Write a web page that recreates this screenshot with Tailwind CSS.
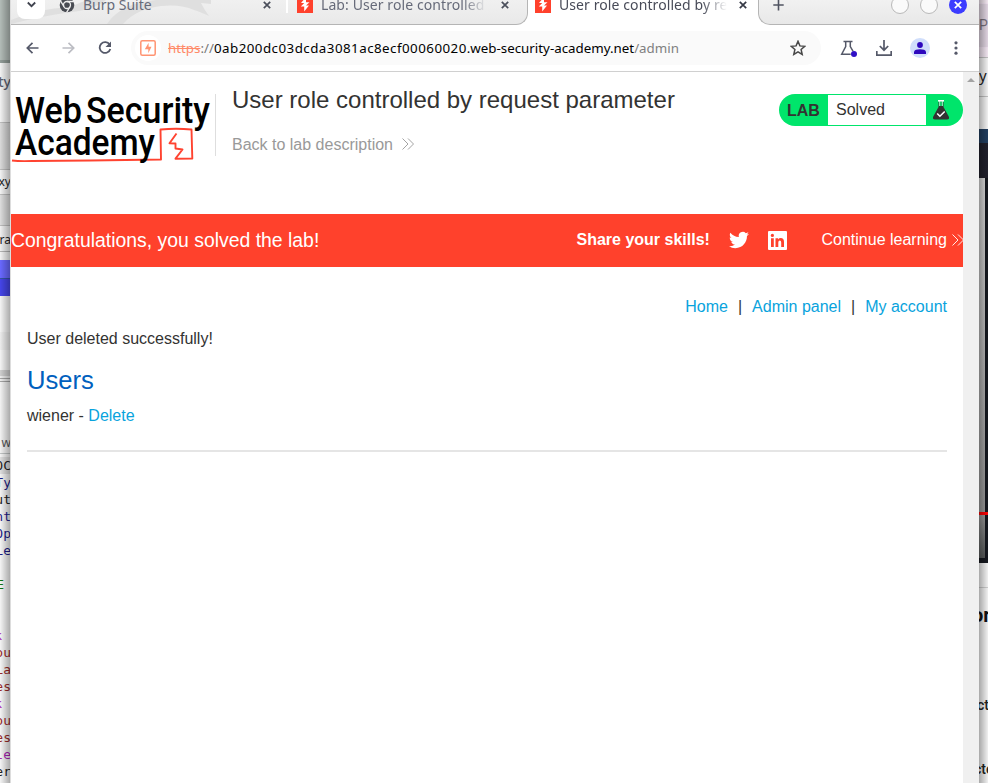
<!DOCTYPE html>
<html lang="en">
<head>
<meta charset="utf-8">
<title>User role controlled by request parameter</title>
<script src="https://cdn.jsdelivr.net/npm/@tailwindcss/browser@4"></script>
</head>
<body class="w-[988px] h-[783px] overflow-hidden flex bg-[#eeeeee] font-['Liberation_Sans',Arial,sans-serif] text-[16px] text-[#333332]">

<svg class="hidden">
  <symbol id="burp" viewBox="0 0 16 16"><rect width="16" height="16" fill="#ff412c"/><path d="M9 0v5.200h3.500L9 8.600h3L7.200 14.500v-5H3.800L7.200 6H4z" fill="#fff"/></symbol>
  <symbol id="close" viewBox="0 0 8 8"><path d="M.8.8l6.4 6.4M7.2.8L.8 7.2" fill="none" stroke="currentColor" stroke-width="1.7"/></symbol>
  <symbol id="chev" viewBox="0 0 12 12"><path d="M.5.5L6 6 .5 11.500M6 .5L11.500 6 6 11.500" fill="none" stroke="currentColor" stroke-width=".9"/></symbol>
</svg>

<!-- window behind, left -->
<div class="relative w-[10px] h-full shrink-0 overflow-hidden flex flex-col bg-[#eeeeee]">
  <div class="h-[60px] shrink-0 bg-[#b3bcb8]"></div>
  <div class="h-[3px] shrink-0 bg-[#929c98]"></div>
  <div class="h-[59px] shrink-0 bg-[#f3f3f3] pt-[9px] flex justify-end font-['Noto_Sans',sans-serif] text-[14px] leading-[20px] font-medium text-[#5d6070]"><span class="-mr-px">ty</span></div>
  <div class="h-[48px] shrink-0 bg-[#dadada] border-y border-[#bdbdbd]"></div>
  <div class="h-[24px] shrink-0 bg-[#f3f3f3] pt-[3px] flex justify-end font-['Noto_Sans',sans-serif] text-[12px] leading-[18px] text-[#222]"><span class="-mr-px">oxy</span></div>
  <div class="h-[32px] shrink-0 bg-[#dddddd] border-y border-[#bdbdbd]"></div>
  <div class="h-[26px] shrink-0 bg-[#f1f1f1] border-b border-[#b5b5b5] pt-[5px] flex justify-end font-['Noto_Sans',sans-serif] text-[12px] leading-[18px] text-[#222]"><span class="-mr-px">ra</span></div>
  <div class="h-[8px] shrink-0 bg-[#f3f3f3]"></div>
  <div class="h-[18px] shrink-0 bg-[#6969ff]"></div>
  <div class="h-[18px] shrink-0 bg-[#4545e8] border-t border-[#3355a5]"></div>
  <div class="h-[36px] shrink-0 bg-[#f5f5f5]"></div>
  <div class="h-[18px] shrink-0 bg-[#ededed]"></div>
  <div class="h-[20px] shrink-0 bg-[#f5f5f5]"></div>
  <div class="h-[6px] shrink-0 bg-[#cfcfcf]"></div>
  <div class="h-[4px] shrink-0 mt-[2px] border-y border-[#a5a5a5]"></div>
  <div class="h-[72px] shrink-0 bg-[#f3f3f3] border-b border-[#c0c4c4] pt-[52px] flex justify-end font-['Noto_Sans',sans-serif] text-[12px] leading-[18px] text-[#555]"><span class="-mr-px">w</span></div>
  <div class="grow bg-[#f5f5f5] pt-[3px] flex flex-col items-end font-['DejaVu_Sans_Mono','Liberation_Mono',monospace] text-[13px] leading-[17px] text-[#1c1c88]">
    <span class="-mr-px bg-[#dedede] text-[#222]">OC</span><span class="-mr-px">Ty</span><span class="-mr-px text-[#222]">ut</span><span class="-mr-px">nt</span><span class="-mr-px">Op</span><span class="-mr-px">Le</span>
    <span class="h-[17px]"></span><span class="text-[#117711] mr-[6px]">E</span><span class="h-[17px]"></span><span class="h-[17px]"></span>
    <span class="text-[#ab24b6] mr-[8px]">k</span><span class="-mr-px text-[#9a2828]">ou</span><span class="-mr-px text-[#9a2828]">La</span><span class="-mr-px text-[#9a2828]">es</span><span class="text-[#ab24b6] mr-[8px]">k</span><span class="-mr-px text-[#9a2828]">ou</span><span class="-mr-px text-[#9a2828]">es</span><span class="-mr-px text-[#ab24b6]">le</span><span class="-mr-px text-[#222]">er</span>
  </div>
  <div class="absolute inset-0 bg-linear-to-r from-black/0 to-black/30"></div>
</div>

<!-- browser window -->
<div class="w-[969px] h-full shrink-0 flex flex-col bg-white border-l border-[#dddddd]">

  <!-- tab strip -->
  <div class="relative h-[25px] shrink-0 bg-white overflow-hidden flex font-['Noto_Sans',sans-serif] text-[14px] text-[#666a79]">
    <div class="relative w-[517px] h-[25px] shrink-0 bg-linear-to-b from-[#f0f0f0] to-[#e9e9e9] border-b border-r border-[#b5b5b5] rounded-br-[12px] overflow-hidden">
      <svg class="absolute left-0 top-0" width="220" height="24" viewBox="0 0 220 24"><path d="M0 20Q25 9 60 7Q80 -4 95 0Q85 8 68 11Q30 16 0 24zM96 24Q110 3 145 0H200V4L190 3Q194 11 198 16Q187 11 183 10Q170 4 150 6Q125 9 112 24z" fill="#dfdfdf"/></svg>
      <div class="relative h-[20px] flex items-start">
        <div class="ml-[6px] w-[28px] h-[19px] shrink-0 rounded-b-[8px] bg-white flex justify-center pt-[1px]"><svg width="9" height="7" viewBox="0 0 9 7"><path d="M.8 1.500L4.500 5.200 8.200 1.500" fill="none" stroke="#40434e" stroke-width="1.800"/></svg></div>
        <svg class="ml-[14px] mt-[-3px] shrink-0" width="16" height="16" viewBox="0 0 16 16"><circle cx="8" cy="8" r="7.300" fill="#484b52"/><circle cx="8" cy="8" r="3.500" fill="#484b52" stroke="#ededed" stroke-width="1.300"/><path d="M8 4.500H15M5 9.700L1.500 3.800M11 9.700L7.500 15.700" stroke="#ededed" stroke-width="1.300"/></svg>
        <span class="ml-[8px] mt-[-5px] leading-[20px] w-[177px] shrink-0">Burp Suite</span>
        <svg class="ml-[3px] mt-[1px] shrink-0 text-[#4b4f5b]" width="8" height="8"><use href="#close"/></svg>
        <i class="ml-[15px] w-[2px] h-[13px] shrink-0 bg-white"></i>
        <svg class="ml-[9px] mt-[-3px] shrink-0" width="16" height="16"><use href="#burp"/></svg>
        <span class="ml-[8px] mt-[-5px] leading-[20px] w-[166px] shrink-0 overflow-hidden whitespace-nowrap tracking-[.09px] mask-r-from-85% mask-r-to-100%">Lab: User role controlled by</span>
        <svg class="ml-[14px] mt-[1px] shrink-0 text-[#4b4f5b]" width="8" height="8"><use href="#close"/></svg>
      </div>
    </div>
    <div class="w-[230px] shrink-0 flex items-start text-[#484b58]">
      <svg class="ml-[7px] mt-[-3px] shrink-0" width="16" height="16"><use href="#burp"/></svg>
      <span class="ml-[8px] mt-[-5px] leading-[20px] w-[168px] shrink-0 overflow-hidden whitespace-nowrap tracking-[.09px] mask-r-from-85% mask-r-to-100%">User role controlled by request</span>
      <svg class="ml-[12px] mt-[1px] shrink-0 text-[#363945]" width="8" height="8"><use href="#close"/></svg>
    </div>
    <div class="w-[221px] h-[25px] shrink-0 bg-linear-to-b from-[#f1f1f1] to-[#e8e8e8] border-b border-l border-[#b5b5b5] rounded-bl-[12px] flex items-start">
      <svg class="ml-[14px] mt-0" width="11" height="11" viewBox="0 0 11 11"><path d="M5.500 0v10.500M.3 5h10.400" stroke="#505461" stroke-width="1.600"/></svg>
      <i class="ml-[107px] mt-[-4px] size-[18px] rounded-full bg-[#fafafa] border border-[#b9b9b9]"></i>
      <i class="ml-[11px] mt-[-4px] size-[18px] rounded-full bg-[#fafafa] border border-[#b9b9b9]"></i>
      <i class="ml-[11px] mt-[-4px] size-[18px] rounded-full bg-[#3c3cff] text-white flex items-center justify-center"><svg width="8" height="8"><use href="#close"/></svg></i>
    </div>
  </div>

  <!-- toolbar -->
  <div class="h-[47px] shrink-0 border-b border-[#d0d0d0] bg-white flex items-center">
    <svg class="ml-[15px]" width="13" height="12" viewBox="0 0 13 12"><path d="M12.500 6H1.500M6.500.8L1.300 6l5.200 5.200" fill="none" stroke="#555969" stroke-width="1.700"/></svg>
    <svg class="ml-[23px]" width="13" height="12" viewBox="0 0 13 12"><path d="M.5 6h11M6.500.8L11.700 6l-5.200 5.200" fill="none" stroke="#bcbdc3" stroke-width="1.700"/></svg>
    <svg class="ml-[23px]" width="14" height="14" viewBox="0 0 14 14"><path d="M11.600 3.500A5.400 5.400 0 1 0 12.300 8" fill="none" stroke="#555969" stroke-width="1.800"/><path d="M13 .5V6H7.500z" fill="#555969"/></svg>
    <div class="ml-[19px] w-[690px] h-[34px] shrink-0 rounded-full bg-[#fafafa] flex items-center">
      <i class="ml-[4px] size-[26px] rounded-full bg-white flex items-center justify-center"><svg width="16" height="16" viewBox="0 0 16 16"><rect x=".8" y=".8" width="14.400" height="14.400" rx="1.500" fill="none" stroke="#ff9472" stroke-width="1.500"/><path d="M8.600 2.800v4h2.900L8.300 13.200V9.200H4.800z" fill="#ff9472"/></svg></i>
      <span class="ml-[7px] w-[600px] font-['Noto_Sans',sans-serif] text-[13.330px] leading-[20px] whitespace-nowrap text-black"><span class="text-[#ff8a68] line-through">https</span><span class="text-[#777]">://</span><span class="tracking-[.47px]">0ab200dc03dcda3081ac8ecf00060020</span>.web-security-academy.net<span class="text-[#808080]">/admin</span></span>
      <svg class="ml-[22px] shrink-0" width="16" height="16" viewBox="0 0 16 16"><path d="M8 1.300l1.900 4.600 4.900.4-3.700 3.200 1.100 4.900L8 11.800l-4.200 2.600 1.100-4.900L1.200 6.300l4.900-.4z" fill="none" stroke="#484848" stroke-width="1.500"/></svg>
    </div>
    <svg class="ml-[19px]" width="18" height="17" viewBox="0 0 18 17"><path d="M3.500 1.500h9M5.700 1.500v5L1.700 14.200h9M10.300 1.500v5l2.700 4.700" fill="none" stroke="#555969" stroke-width="1.500"/><circle cx="14" cy="14" r="3" fill="#3010c5"/></svg>
    <svg class="ml-[18px]" width="16" height="16" viewBox="0 0 16 16"><path d="M8 0v10M3.800 6L8 10.200 12.200 6M.8 11v4.200h14.400V11" fill="none" stroke="#555969" stroke-width="1.700"/></svg>
    <i class="ml-[18px] size-[20px] rounded-full bg-[#d0defb] flex items-center justify-center"><svg width="12" height="12" viewBox="0 0 12 12" fill="#2d08bd"><circle cx="6" cy="3" r="2.900"/><path d="M0 12v-2.300Q1 7.300 6 7.300T12 9.700V12z"/></svg></i>
    <svg class="ml-[24px]" width="4" height="14" viewBox="0 0 4 14" fill="#555969"><circle cx="2" cy="1.800" r="1.600"/><circle cx="2" cy="7" r="1.600"/><circle cx="2" cy="12.200" r="1.600"/></svg>
  </div>

  <!-- page -->
  <div class="grow flex min-h-0">
    <main class="w-[952px] shrink-0 overflow-hidden bg-white">
      <header class="h-[142px] flex">
        <svg class="shrink-0" width="204" height="100" viewBox="11 72 204 100" font-family="Roboto, sans-serif" font-weight="500" font-size="37">
          <g fill="#000"><text x="15" y="122.500" textLength="67" lengthAdjust="spacingAndGlyphs">Web</text><text x="86" y="122.500" textLength="124" lengthAdjust="spacingAndGlyphs">Security</text></g>
          <g fill="none" stroke="#ff4330" stroke-width="1.900" stroke-linejoin="round"><path d="M12 160.500Q20 161.500 32 161L90 160.500 161 159.500 160.500 129.500Q176 128 191.500 129.500L192.300 158.500 175.500 158.700 182.500 149.500 175.500 148.500V143.500L169.500 143.200 176.500 133.500"/></g>
          <text x="15" y="155" fill="#000" textLength="140" lengthAdjust="spacingAndGlyphs">Academy</text>
        </svg>
        <div class="mt-[22px] h-[62px] w-px bg-[#dedede] shrink-0"></div>
        <div class="ml-[16px] w-[547px] shrink-0">
          <h2 class="mt-[14px] text-[24px] leading-[28px] whitespace-nowrap">User role controlled by request parameter</h2>
          <div class="mt-[21px] h-[20px] flex items-center text-[#999]"><span>Back to lab description</span><svg class="ml-[9px] -mt-[2px]" width="12" height="12"><use href="#chev"/></svg></div>
        </div>
        <div class="mt-[22px] w-[184px] h-[32px] shrink-0 rounded-full bg-[#00e56b] overflow-hidden flex items-center">
          <b class="w-[49px] pl-[8px] pt-px leading-[20px]">LAB</b>
          <span class="w-[98px] h-[30px] bg-white pl-[8px] leading-[30px]">Solved</span>
          <svg class="ml-[6px]" width="18" height="20" viewBox="0 0 18 20"><path d="M6.500 2v5L1 17Q.5 19.500 3 19.500h12Q17.500 19.500 17 17L11.500 7V2z" fill="#333332"/><path d="M6 0h6v1.500h-1V6H7V1.500H6z" fill="#fff"/><path d="M7.500 1.500h3V6h-3z" fill="#20c86c"/><path d="M5.200 13.500l2.700 2.700 4.800-4.700" fill="none" stroke="#fff" stroke-width="1.600"/></svg>
        </div>
      </header>

      <section class="h-[53px] bg-[#ff412c] text-white flex items-center whitespace-nowrap overflow-hidden">
        <span class="w-[565.500px] shrink-0 text-[19.400px]">Congratulations, you solved the lab!</span>
        <b class="shrink-0 w-[152px] -mt-[2px]">Share your skills!</b>
        <svg class="shrink-0 -mt-[2px]" width="20" height="20" viewBox="0 0 24 24" fill="#fff"><path d="M23.950 4.570a10 10 0 0 1-2.820.77 4.960 4.960 0 0 0 2.160-2.720c-.95.55-2 .95-3.130 1.180a4.920 4.920 0 0 0-8.380 4.480C7.690 8.090 4.070 6.130 1.640 3.160a4.820 4.820 0 0 0-.67 2.480c0 1.710.87 3.210 2.190 4.100a4.900 4.900 0 0 1-2.230-.62v.06a4.920 4.920 0 0 0 3.950 4.830 5 5 0 0 1-2.210.08 4.940 4.940 0 0 0 4.600 3.420A9.870 9.870 0 0 1 0 19.540a13.990 13.990 0 0 0 7.550 2.210c9.050 0 14-7.500 14-13.980 0-.21 0-.42-.02-.63a9.940 9.940 0 0 0 2.420-2.570z"/></svg>
        <svg class="ml-[19px] shrink-0" width="19" height="19" viewBox="0 0 19 19"><rect width="19" height="19" rx="1" fill="#fff"/><g fill="#ff412c"><circle cx="4.400" cy="4.400" r="1.600"/><path d="M3 7.300h2.800V16H3zM7.500 7.300h2.700v1.200Q11 7.100 12.800 7.100 16 7.100 16 11v5h-2.800v-4.500q0-2-1.400-2-1.500 0-1.500 2V16H7.500z"/></g></svg>
        <span class="ml-[35px] -mt-[2px]">Continue learning</span><svg class="ml-[5px] -mt-[2px] shrink-0" width="12" height="12"><use href="#chev"/></svg>
      </section>

      <section class="px-[16px] pt-[30px]">
        <nav class="flex justify-end leading-[20px] whitespace-nowrap"><a class="text-[#09a3dd]">Home</a><span class="mx-[10px]">|</span><a class="text-[#09a3dd]">Admin panel</a><span class="mx-[10px]">|</span><a class="text-[#09a3dd]">My account</a></nav>
        <p class="mt-[12px] leading-[20px]">User deleted successfully!</p>
        <h1 class="mt-[15px] text-[25.600px] leading-[32px] text-[#0060be]">Users</h1>
        <p class="mt-[10px] leading-[20px]">wiener - <a class="text-[#09a3dd]">Delete</a></p>
        <hr class="mt-[24px] border-0 h-[2px] bg-[#e5e5e5]">
      </section>
    </main>
    <div class="w-[16px] shrink-0 bg-[#f0f0f0] flex justify-center pt-[6px]"><svg width="8" height="4" viewBox="0 0 8 4"><path d="M4 0l4 4H0z" fill="#a3a3a3"/></svg></div>
  </div>
</div>

<!-- window behind, right -->
<div class="relative w-[9px] h-full shrink-0 overflow-hidden flex flex-col bg-[#f0f0f0] whitespace-nowrap">
  <div class="h-[3px] shrink-0 bg-[#f0e5ee]"></div>
  <div class="h-[45px] shrink-0 bg-[#ded2df] border-y border-[#eee0ee] pt-[11px] font-['Roboto',sans-serif] text-[14px] leading-[20px] text-[#77707c]">Pa</div>
  <div class="h-[9px] shrink-0 bg-[#efe3ee]"></div>
  <div class="h-[40px] shrink-0 border-y border-[#bdbdbd] pt-[7px] font-['Noto_Sans',sans-serif] text-[15px] leading-[20px] text-[#222]">y</div>
  <div class="h-[32px] shrink-0"></div>
  <div class="h-[14px] shrink-0 bg-[#213d5e]"></div>
  <div class="h-[35px] shrink-0 bg-[#20202b]"></div>
  <div class="h-[385px] shrink-0 flex flex-col bg-[#15181e]">
    <div class="w-[6px] h-[334px] bg-linear-to-b from-[#d6d6d6] to-[#959595]"></div>
    <div class="h-[3px] bg-[#fa0505]"></div>
    <div class="w-[6px] h-[43px] bg-linear-to-b from-[#969696] to-[#555858]"></div>
  </div>
  <div class="h-[25px] shrink-0 border-b border-[#cacaca]"></div>
  <div class="h-[109px] shrink-0 pt-[15px] -ml-[7px] font-['Roboto',sans-serif] font-bold text-[20px] leading-[24px] text-[#111]">or</div>
  <div class="h-[64px] shrink-0 -ml-[2px] font-['Roboto',sans-serif] font-medium text-[14px] leading-[16px] text-[#222]">ct</div>
  <div class="-ml-[5px] font-['Roboto',sans-serif] font-medium text-[14px] leading-[16px] text-[#222]">cte</div>
  <div class="absolute inset-0 bg-linear-to-r from-black/30 to-black/0"></div>
</div>
</body>
</html>
